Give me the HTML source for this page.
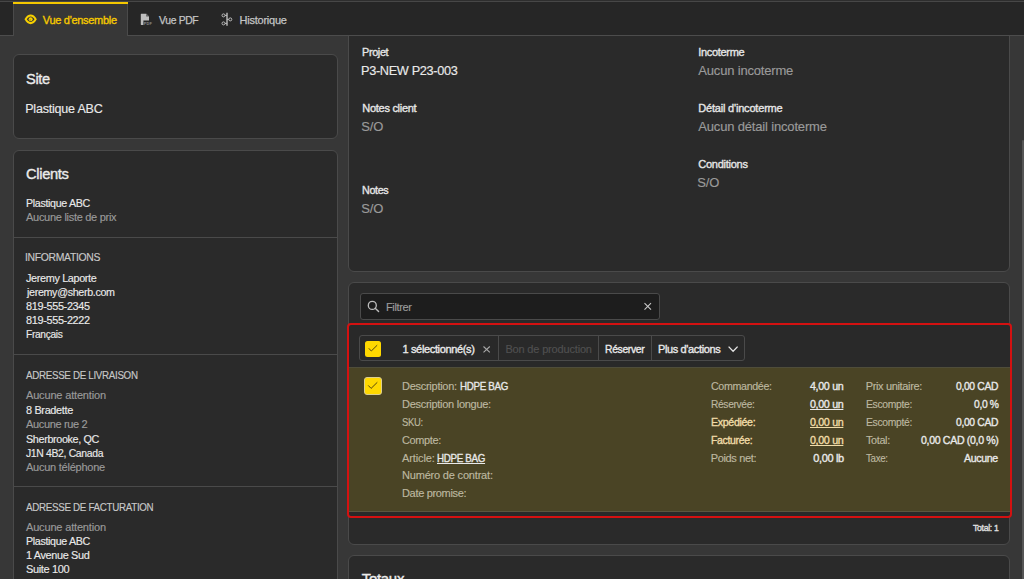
<!DOCTYPE html>
<html><head><meta charset="utf-8">
<style>
html,body{margin:0;padding:0;}
body{width:1024px;height:579px;overflow:hidden;background:#373737;position:relative;font-family:"Liberation Sans",sans-serif;}
.a{position:absolute;box-sizing:border-box;}
.t{position:absolute;white-space:nowrap;font-family:"Liberation Sans",sans-serif;}
.card{position:absolute;box-sizing:border-box;background:#2a2a2a;border:1px solid #4a4a4a;border-radius:6px;}
.hr{position:absolute;height:1px;background:#4a4a4a;}
svg{position:absolute;overflow:visible;}
</style></head><body>
<!-- left column cards -->
<div class="card" style="left:13px;top:54px;width:325px;height:85px;"></div>
<div class="card" style="left:13px;top:150px;width:325px;height:480px;"></div>
<div class="hr" style="left:14px;top:237px;width:323px;"></div>
<div class="hr" style="left:14px;top:354px;width:323px;"></div>
<div class="hr" style="left:14px;top:486px;width:323px;"></div>
<!-- right column cards -->
<div class="card" style="left:348px;top:-20px;width:662px;height:292px;"></div>
<div class="card" style="left:348px;top:282px;width:662px;height:263px;"></div>
<div class="card" style="left:348px;top:555px;width:662px;height:100px;"></div>
<!-- filter -->
<div class="a" style="left:360px;top:293px;width:300px;height:27px;background:#1d1d1d;border:1px solid #4a4a4a;border-radius:3px;"></div>
<svg style="left:0;top:0" width="1" height="1">
 <circle cx="372.3" cy="305.4" r="4.0" fill="none" stroke="#bdbdbd" stroke-width="1.3"/>
 <line x1="375.2" y1="308.3" x2="378.6" y2="311.6" stroke="#bdbdbd" stroke-width="1.4" stroke-linecap="round"/>
 <path d="M644.5 303.2 L651 309.7 M651 303.2 L644.5 309.7" stroke="#c8c8c8" stroke-width="1.1"/>
</svg>
<!-- red selection box -->
<div class="a" style="left:347px;top:323px;width:665px;height:195px;border:2px solid #d41111;border-radius:4px;background:#292929;overflow:hidden;">
  <div class="a" style="left:0;top:42px;width:661px;height:145px;background:#4a4425;border-top:1px solid #4f4d3a;border-bottom:1px solid #5a5640;"></div>
</div>
<!-- toolbar -->
<div class="a" style="left:359px;top:335px;width:386px;height:26px;border:1px solid #4a4a4a;border-radius:3px;"></div>
<div class="a" style="left:498px;top:336px;width:1px;height:24px;background:#4a4a4a;"></div>
<div class="a" style="left:598px;top:336px;width:1px;height:24px;background:#4a4a4a;"></div>
<div class="a" style="left:651px;top:336px;width:1px;height:24px;background:#4a4a4a;"></div>
<div class="a" style="left:365px;top:341px;width:16px;height:16px;background:#ffd800;border-radius:2.5px;"></div>
<div class="a" style="left:364px;top:377px;width:17.5px;height:17.5px;background:#ffd800;border:1px solid #dccf8e;border-radius:3px;"></div>
<svg style="left:0;top:0" width="1" height="1">
 <path d="M368.8 348.3 L371.3 351.0 L377.2 345.2" fill="none" stroke="#55460f" stroke-width="1.0"/>
 <path d="M368.2 385.4 L371.1 388.4 L377.3 382.3" fill="none" stroke="#55460f" stroke-width="1.0"/>
 <path d="M483.5 346.5 L489.8 352.3 M489.8 346.5 L483.5 352.3" stroke="#a8a8a8" stroke-width="1.1"/>
 <path d="M728.6 346.6 L733.1 351.3 L737.6 346.6" fill="none" stroke="#e6e6e6" stroke-width="1.3"/>
</svg>
<!-- tab bar -->
<div class="a" style="left:0;top:0;width:1024px;height:36px;background:#262626;"></div>
<div class="a" style="left:0;top:0;width:1024px;height:1px;background:#2e2e2e;"></div>
<div class="a" style="left:0;top:1px;width:1024px;height:1px;background:#474747;"></div>
<div class="a" style="left:0;top:35px;width:1024px;height:1px;background:#4c4c4c;"></div>
<div class="a" style="left:13px;top:2px;width:115px;height:34px;background:#373737;border-left:1px solid #4a4a4a;border-right:1px solid #4a4a4a;"></div>
<div class="a" style="left:13px;top:2px;width:115px;height:2px;background:#f5c800;"></div>
<svg style="left:0;top:0" width="1" height="1">
 <path d="M24.5 19.35 C26.4 15.8 28.4 14.5 30.65 14.5 C32.9 14.5 34.9 15.8 36.8 19.35 C34.9 22.9 32.9 24.2 30.65 24.2 C28.4 24.2 26.4 22.9 24.5 19.35 Z" fill="#f7d000"/>
 <path d="M26.8 19.35 C28.1 17.4 29.3 16.6 30.65 16.6 C32.0 16.6 33.2 17.4 34.5 19.35 C33.2 21.3 32.0 22.1 30.65 22.1 C29.3 22.1 28.1 21.3 26.8 19.35 Z" fill="#373737"/>
 <circle cx="30.65" cy="19.35" r="2.0" fill="#f7d000"/>
 <circle cx="30.1" cy="19.9" r="0.55" fill="#7a6a10"/>
 <!-- pdf -->
 <path d="M140.8 14.2 Q140.8 13.8 141.2 13.8 L146.3 13.8 L149 16.5 L149 20.6 L143.4 20.6 L143.4 24.9 L141.2 24.9 Q140.8 24.9 140.8 24.5 Z" fill="#bebebe"/>
 <path d="M146.2 13.8 L146.2 16.6 L149 16.6 Z" fill="#5a5a5a"/>
 <text x="143.7" y="24.7" font-family="Liberation Sans" font-size="3.9" font-weight="700" fill="#8c8c8c" letter-spacing="0.2">PDF</text>
 <!-- historique -->
 <line x1="227" y1="12.8" x2="227" y2="25.8" stroke="#bdbdbd" stroke-width="1.4"/>
 <circle cx="223.5" cy="15.4" r="1.5" fill="none" stroke="#bdbdbd" stroke-width="1"/>
 <circle cx="223.5" cy="23.4" r="1.5" fill="none" stroke="#bdbdbd" stroke-width="1"/>
 <circle cx="230.3" cy="19.4" r="1.5" fill="none" stroke="#bdbdbd" stroke-width="1"/>
 <line x1="225" y1="15.4" x2="227" y2="15.4" stroke="#bdbdbd" stroke-width="1"/>
 <line x1="225" y1="23.4" x2="227" y2="23.4" stroke="#bdbdbd" stroke-width="1"/>
 <line x1="227" y1="19.4" x2="228.8" y2="19.4" stroke="#bdbdbd" stroke-width="1"/>
</svg>
<div class="a" style="left:1022px;top:140px;width:2px;height:460px;background:#555555;border-radius:1px;"></div>
<div class='t' style='left:42.8px;top:15px;font-size:11px;line-height:11px;font-weight:400;letter-spacing:-0.300px;color:#f5c800;-webkit-text-stroke:0.35px currentColor;'>Vue d&#39;ensemble</div>
<div class='t' style='left:158.5px;top:15px;font-size:11px;line-height:11px;font-weight:400;letter-spacing:-0.350px;color:#c4c4c4;-webkit-text-stroke:0.25px currentColor;transform:scaleX(0.9427);transform-origin:0 0;'>Vue PDF</div>
<div class='t' style='left:239.6px;top:15px;font-size:11px;line-height:11px;font-weight:400;letter-spacing:-0.244px;color:#c4c4c4;-webkit-text-stroke:0.25px currentColor;'>Historique</div>
<div class='t' style='left:25.7px;top:71px;font-size:15px;line-height:15px;font-weight:400;letter-spacing:-0.350px;color:#ececec;-webkit-text-stroke:0.35px currentColor;transform:scaleX(0.9739);transform-origin:0 0;'>Site</div>
<div class='t' style='left:25.2px;top:103px;font-size:12.5px;line-height:12.5px;font-weight:400;letter-spacing:-0.200px;color:#e9e9e9;-webkit-text-stroke:0.15px currentColor;'>Plastique ABC</div>
<div class='t' style='left:26.1px;top:166px;font-size:15px;line-height:15px;font-weight:400;letter-spacing:-0.350px;color:#ececec;-webkit-text-stroke:0.35px currentColor;transform:scaleX(0.9818);transform-origin:0 0;'>Clients</div>
<div class='t' style='left:26.1px;top:198px;font-size:11px;line-height:11px;font-weight:400;letter-spacing:-0.350px;color:#e9e9e9;-webkit-text-stroke:0.15px currentColor;transform:scaleX(0.9711);transform-origin:0 0;'>Plastique ABC</div>
<div class='t' style='left:26.0px;top:212px;font-size:11px;line-height:11px;font-weight:400;letter-spacing:-0.284px;color:#9a9a9a;-webkit-text-stroke:0.15px currentColor;'>Aucune liste de prix</div>
<div class='t' style='left:25.3px;top:252px;font-size:11px;line-height:11px;font-weight:400;letter-spacing:-0.350px;color:#c8c8c8;-webkit-text-stroke:0.15px currentColor;transform:scaleX(0.9476);transform-origin:0 0;'>INFORMATIONS</div>
<div class='t' style='left:26.2px;top:273px;font-size:11px;line-height:11px;font-weight:400;letter-spacing:-0.350px;color:#e9e9e9;-webkit-text-stroke:0.15px currentColor;transform:scaleX(0.9853);transform-origin:0 0;'>Jeremy Laporte</div>
<div class='t' style='left:27.2px;top:287px;font-size:11px;line-height:11px;font-weight:400;letter-spacing:-0.350px;color:#e9e9e9;-webkit-text-stroke:0.15px currentColor;transform:scaleX(0.9752);transform-origin:0 0;'>jeremy@sherb.com</div>
<div class='t' style='left:26.2px;top:301px;font-size:11px;line-height:11px;font-weight:400;letter-spacing:-0.350px;color:#e9e9e9;-webkit-text-stroke:0.15px currentColor;transform:scaleX(0.9916);transform-origin:0 0;'>819-555-2345</div>
<div class='t' style='left:26.2px;top:315px;font-size:11px;line-height:11px;font-weight:400;letter-spacing:-0.350px;color:#e9e9e9;-webkit-text-stroke:0.15px currentColor;transform:scaleX(0.9916);transform-origin:0 0;'>819-555-2222</div>
<div class='t' style='left:26.2px;top:329px;font-size:11px;line-height:11px;font-weight:400;letter-spacing:-0.350px;color:#e9e9e9;-webkit-text-stroke:0.15px currentColor;transform:scaleX(0.9254);transform-origin:0 0;'>Fran&ccedil;ais</div>
<div class='t' style='left:26.0px;top:370px;font-size:11px;line-height:11px;font-weight:400;letter-spacing:-0.350px;color:#c8c8c8;-webkit-text-stroke:0.15px currentColor;transform:scaleX(0.8887);transform-origin:0 0;'>ADRESSE DE LIVRAISON</div>
<div class='t' style='left:26.0px;top:390px;font-size:11px;line-height:11px;font-weight:400;letter-spacing:-0.167px;color:#9a9a9a;-webkit-text-stroke:0.15px currentColor;'>Aucune attention</div>
<div class='t' style='left:26.0px;top:405px;font-size:11px;line-height:11px;font-weight:400;letter-spacing:-0.350px;color:#e9e9e9;-webkit-text-stroke:0.15px currentColor;transform:scaleX(0.9927);transform-origin:0 0;'>8 Bradette</div>
<div class='t' style='left:26.0px;top:419px;font-size:11px;line-height:11px;font-weight:400;letter-spacing:-0.350px;color:#9a9a9a;-webkit-text-stroke:0.15px currentColor;'>Aucune rue 2</div>
<div class='t' style='left:26.0px;top:434px;font-size:11px;line-height:11px;font-weight:400;letter-spacing:-0.350px;color:#e9e9e9;-webkit-text-stroke:0.15px currentColor;transform:scaleX(0.9792);transform-origin:0 0;'>Sherbrooke, QC</div>
<div class='t' style='left:26.0px;top:448px;font-size:11px;line-height:11px;font-weight:400;letter-spacing:-0.350px;color:#e9e9e9;-webkit-text-stroke:0.15px currentColor;transform:scaleX(0.9452);transform-origin:0 0;'>J1N 4B2, Canada</div>
<div class='t' style='left:26.0px;top:462px;font-size:11px;line-height:11px;font-weight:400;letter-spacing:-0.243px;color:#9a9a9a;-webkit-text-stroke:0.15px currentColor;'>Aucun t&eacute;l&eacute;phone</div>
<div class='t' style='left:26.0px;top:502px;font-size:11px;line-height:11px;font-weight:400;letter-spacing:-0.350px;color:#c8c8c8;-webkit-text-stroke:0.15px currentColor;transform:scaleX(0.8903);transform-origin:0 0;'>ADRESSE DE FACTURATION</div>
<div class='t' style='left:26.0px;top:522px;font-size:11px;line-height:11px;font-weight:400;letter-spacing:-0.167px;color:#9a9a9a;-webkit-text-stroke:0.15px currentColor;'>Aucune attention</div>
<div class='t' style='left:26.0px;top:536px;font-size:11px;line-height:11px;font-weight:400;letter-spacing:-0.350px;color:#e9e9e9;-webkit-text-stroke:0.15px currentColor;transform:scaleX(0.9726);transform-origin:0 0;'>Plastique ABC</div>
<div class='t' style='left:26.0px;top:550px;font-size:11px;line-height:11px;font-weight:400;letter-spacing:-0.350px;color:#e9e9e9;-webkit-text-stroke:0.15px currentColor;transform:scaleX(0.9883);transform-origin:0 0;'>1 Avenue Sud</div>
<div class='t' style='left:26.0px;top:564px;font-size:11px;line-height:11px;font-weight:400;letter-spacing:-0.350px;color:#e9e9e9;-webkit-text-stroke:0.15px currentColor;'>Suite 100</div>
<div class='t' style='left:362.3px;top:47px;font-size:11px;line-height:11px;font-weight:400;letter-spacing:-0.350px;color:#e6e6e6;-webkit-text-stroke:0.35px currentColor;transform:scaleX(0.9872);transform-origin:0 0;'>Projet</div>
<div class='t' style='left:361.3px;top:64px;font-size:13px;line-height:13px;font-weight:400;letter-spacing:-0.350px;color:#e9e9e9;-webkit-text-stroke:0.15px currentColor;transform:scaleX(0.9800);transform-origin:0 0;'>P3-NEW P23-003</div>
<div class='t' style='left:362.3px;top:103px;font-size:11px;line-height:11px;font-weight:400;letter-spacing:-0.282px;color:#e6e6e6;-webkit-text-stroke:0.35px currentColor;'>Notes client</div>
<div class='t' style='left:361.3px;top:120px;font-size:13px;line-height:13px;font-weight:400;letter-spacing:-0.150px;color:#9a9a9a;-webkit-text-stroke:0.15px currentColor;'>S/O</div>
<div class='t' style='left:362.4px;top:185px;font-size:11px;line-height:11px;font-weight:400;letter-spacing:-0.350px;color:#e6e6e6;-webkit-text-stroke:0.35px currentColor;transform:scaleX(0.9746);transform-origin:0 0;'>Notes</div>
<div class='t' style='left:361.3px;top:202px;font-size:13px;line-height:13px;font-weight:400;letter-spacing:-0.150px;color:#9a9a9a;-webkit-text-stroke:0.15px currentColor;'>S/O</div>
<div class='t' style='left:698.3px;top:47px;font-size:11px;line-height:11px;font-weight:400;letter-spacing:-0.325px;color:#e6e6e6;-webkit-text-stroke:0.35px currentColor;'>Incoterme</div>
<div class='t' style='left:698.3px;top:64px;font-size:13px;line-height:13px;font-weight:400;letter-spacing:-0.179px;color:#9a9a9a;-webkit-text-stroke:0.15px currentColor;'>Aucun incoterme</div>
<div class='t' style='left:698.3px;top:103px;font-size:11px;line-height:11px;font-weight:400;letter-spacing:-0.194px;color:#e6e6e6;-webkit-text-stroke:0.35px currentColor;'>D&eacute;tail d&#39;incoterme</div>
<div class='t' style='left:698.3px;top:120px;font-size:13px;line-height:13px;font-weight:400;letter-spacing:-0.171px;color:#9a9a9a;-webkit-text-stroke:0.15px currentColor;'>Aucun d&eacute;tail incoterme</div>
<div class='t' style='left:698.3px;top:159px;font-size:11px;line-height:11px;font-weight:400;letter-spacing:-0.256px;color:#e6e6e6;-webkit-text-stroke:0.35px currentColor;'>Conditions</div>
<div class='t' style='left:697.3px;top:176px;font-size:13px;line-height:13px;font-weight:400;letter-spacing:-0.150px;color:#9a9a9a;-webkit-text-stroke:0.15px currentColor;'>S/O</div>
<div class='t' style='left:385.9px;top:302px;font-size:11px;line-height:11px;font-weight:400;letter-spacing:-0.333px;color:#9c9c9c;-webkit-text-stroke:0.15px currentColor;'>Filtrer</div>
<div class='t' style='left:402.5px;top:344px;font-size:11px;line-height:11px;font-weight:400;letter-spacing:-0.350px;color:#e9e9e9;-webkit-text-stroke:0.35px currentColor;'>1 s&eacute;lectionn&eacute;(s)</div>
<div class='t' style='left:505.4px;top:344px;font-size:11px;line-height:11px;font-weight:400;letter-spacing:-0.169px;color:#505050;-webkit-text-stroke:0.15px currentColor;'>Bon de production</div>
<div class='t' style='left:605.0px;top:344px;font-size:11px;line-height:11px;font-weight:400;letter-spacing:-0.350px;color:#e9e9e9;-webkit-text-stroke:0.35px currentColor;transform:scaleX(0.9401);transform-origin:0 0;'>R&eacute;server</div>
<div class='t' style='left:658.2px;top:344px;font-size:11px;line-height:11px;font-weight:400;letter-spacing:-0.350px;color:#e9e9e9;-webkit-text-stroke:0.35px currentColor;transform:scaleX(0.9961);transform-origin:0 0;'>Plus d&#39;actions</div>
<div class='t' style='left:402.0px;top:381px;font-size:11px;line-height:11px;font-weight:400;letter-spacing:-0.273px;color:#bdb8a0;-webkit-text-stroke:0.15px currentColor;'>Description:</div>
<div class='t' style='left:460.0px;top:381px;font-size:11px;line-height:11px;font-weight:400;letter-spacing:-0.350px;color:#e9e9e9;-webkit-text-stroke:0.35px currentColor;transform:scaleX(0.8891);transform-origin:0 0;'>HDPE BAG</div>
<div class='t' style='left:402.0px;top:399px;font-size:11px;line-height:11px;font-weight:400;letter-spacing:-0.278px;color:#bdb8a0;-webkit-text-stroke:0.15px currentColor;'>Description longue:</div>
<div class='t' style='left:402.0px;top:417px;font-size:11px;line-height:11px;font-weight:400;letter-spacing:-0.350px;color:#bdb8a0;-webkit-text-stroke:0.15px currentColor;transform:scaleX(0.8601);transform-origin:0 0;'>SKU:</div>
<div class='t' style='left:402.0px;top:435px;font-size:11px;line-height:11px;font-weight:400;letter-spacing:-0.350px;color:#bdb8a0;-webkit-text-stroke:0.15px currentColor;transform:scaleX(0.9949);transform-origin:0 0;'>Compte:</div>
<div class='t' style='left:402.0px;top:453px;font-size:11px;line-height:11px;font-weight:400;letter-spacing:-0.114px;color:#bdb8a0;-webkit-text-stroke:0.15px currentColor;'>Article:</div>
<div class='t' style='left:437.0px;top:453px;font-size:11px;line-height:11px;font-weight:400;letter-spacing:-0.350px;color:#e9e9e9;-webkit-text-stroke:0.35px currentColor;transform:scaleX(0.8891);transform-origin:0 0;text-decoration:underline;'>HDPE BAG</div>
<div class='t' style='left:402.0px;top:470px;font-size:11px;line-height:11px;font-weight:400;letter-spacing:-0.188px;color:#bdb8a0;-webkit-text-stroke:0.15px currentColor;'>Num&eacute;ro de contrat:</div>
<div class='t' style='left:402.0px;top:488px;font-size:11px;line-height:11px;font-weight:400;letter-spacing:-0.325px;color:#bdb8a0;-webkit-text-stroke:0.15px currentColor;'>Date promise:</div>
<div class='t' style='left:710.7px;top:381px;font-size:11px;line-height:11px;font-weight:400;letter-spacing:-0.350px;color:#bdb8a0;-webkit-text-stroke:0.15px currentColor;transform:scaleX(0.9706);transform-origin:0 0;'>Command&eacute;e:</div>
<div class='t' style='left:710.7px;top:399px;font-size:11px;line-height:11px;font-weight:400;letter-spacing:-0.350px;color:#bdb8a0;-webkit-text-stroke:0.15px currentColor;transform:scaleX(0.9258);transform-origin:0 0;'>R&eacute;serv&eacute;e:</div>
<div class='t' style='left:710.7px;top:417px;font-size:11px;line-height:11px;font-weight:400;letter-spacing:-0.350px;color:#f0dca8;-webkit-text-stroke:0.35px currentColor;transform:scaleX(0.9668);transform-origin:0 0;'>Exp&eacute;di&eacute;e:</div>
<div class='t' style='left:710.7px;top:435px;font-size:11px;line-height:11px;font-weight:400;letter-spacing:-0.350px;color:#f0dca8;-webkit-text-stroke:0.35px currentColor;transform:scaleX(0.9514);transform-origin:0 0;'>Factur&eacute;e:</div>
<div class='t' style='left:710.7px;top:453px;font-size:11px;line-height:11px;font-weight:400;letter-spacing:-0.344px;color:#bdb8a0;-webkit-text-stroke:0.15px currentColor;'>Poids net:</div>
<div class='t' style='left:810.2px;top:381px;font-size:11px;line-height:11px;font-weight:400;letter-spacing:-0.350px;color:#e9e9e9;-webkit-text-stroke:0.35px currentColor;transform:scaleX(0.9742);transform-origin:0 0;'>4,00 un</div>
<div class='t' style='left:810.2px;top:399px;font-size:11px;line-height:11px;font-weight:400;letter-spacing:-0.350px;color:#e9e9e9;-webkit-text-stroke:0.35px currentColor;transform:scaleX(0.9742);transform-origin:0 0;text-decoration:underline;'>0,00 un</div>
<div class='t' style='left:810.2px;top:417px;font-size:11px;line-height:11px;font-weight:400;letter-spacing:-0.350px;color:#f0dca8;-webkit-text-stroke:0.35px currentColor;transform:scaleX(0.9742);transform-origin:0 0;text-decoration:underline;'>0,00 un</div>
<div class='t' style='left:810.2px;top:435px;font-size:11px;line-height:11px;font-weight:400;letter-spacing:-0.350px;color:#f0dca8;-webkit-text-stroke:0.35px currentColor;transform:scaleX(0.9742);transform-origin:0 0;text-decoration:underline;'>0,00 un</div>
<div class='t' style='left:813.3px;top:453px;font-size:11px;line-height:11px;font-weight:400;letter-spacing:-0.350px;color:#e9e9e9;-webkit-text-stroke:0.35px currentColor;'>0,00 lb</div>
<div class='t' style='left:865.7px;top:381px;font-size:11px;line-height:11px;font-weight:400;letter-spacing:-0.350px;color:#bdb8a0;-webkit-text-stroke:0.15px currentColor;'>Prix unitaire:</div>
<div class='t' style='left:865.7px;top:399px;font-size:11px;line-height:11px;font-weight:400;letter-spacing:-0.350px;color:#bdb8a0;-webkit-text-stroke:0.15px currentColor;transform:scaleX(0.9411);transform-origin:0 0;'>Escompte:</div>
<div class='t' style='left:865.7px;top:417px;font-size:11px;line-height:11px;font-weight:400;letter-spacing:-0.350px;color:#bdb8a0;-webkit-text-stroke:0.15px currentColor;transform:scaleX(0.9411);transform-origin:0 0;'>Escompt&eacute;:</div>
<div class='t' style='left:865.7px;top:435px;font-size:11px;line-height:11px;font-weight:400;letter-spacing:-0.350px;color:#bdb8a0;-webkit-text-stroke:0.15px currentColor;transform:scaleX(0.9856);transform-origin:0 0;'>Total:</div>
<div class='t' style='left:865.7px;top:453px;font-size:11px;line-height:11px;font-weight:400;letter-spacing:-0.350px;color:#bdb8a0;-webkit-text-stroke:0.15px currentColor;transform:scaleX(0.8862);transform-origin:0 0;'>Taxe:</div>
<div class='t' style='left:955.9px;top:381px;font-size:11px;line-height:11px;font-weight:400;letter-spacing:-0.350px;color:#e9e9e9;-webkit-text-stroke:0.35px currentColor;transform:scaleX(0.9374);transform-origin:0 0;'>0,00 CAD</div>
<div class='t' style='left:973.8px;top:399px;font-size:11px;line-height:11px;font-weight:400;letter-spacing:-0.350px;color:#e9e9e9;-webkit-text-stroke:0.35px currentColor;transform:scaleX(0.9323);transform-origin:0 0;'>0,0 %</div>
<div class='t' style='left:955.9px;top:417px;font-size:11px;line-height:11px;font-weight:400;letter-spacing:-0.350px;color:#e9e9e9;-webkit-text-stroke:0.35px currentColor;transform:scaleX(0.9374);transform-origin:0 0;'>0,00 CAD</div>
<div class='t' style='left:920.9px;top:435px;font-size:11px;line-height:11px;font-weight:400;letter-spacing:-0.350px;color:#e9e9e9;-webkit-text-stroke:0.35px currentColor;transform:scaleX(0.9622);transform-origin:0 0;'>0,00 CAD (0,0 %)</div>
<div class='t' style='left:963.7px;top:453px;font-size:11px;line-height:11px;font-weight:400;letter-spacing:-0.350px;color:#e9e9e9;-webkit-text-stroke:0.35px currentColor;transform:scaleX(0.9628);transform-origin:0 0;'>Aucune</div>
<div class='t' style='left:972.7px;top:523px;font-size:9.5px;line-height:9.5px;font-weight:400;letter-spacing:-0.350px;color:#e0e0e0;-webkit-text-stroke:0.35px currentColor;transform:scaleX(0.9177);transform-origin:0 0;'>Total: 1</div>
<div class='t' style='left:361.8px;top:571px;font-size:15px;line-height:15px;font-weight:400;letter-spacing:-0.320px;color:#ececec;-webkit-text-stroke:0.35px currentColor;'>Totaux</div>
</body></html>
